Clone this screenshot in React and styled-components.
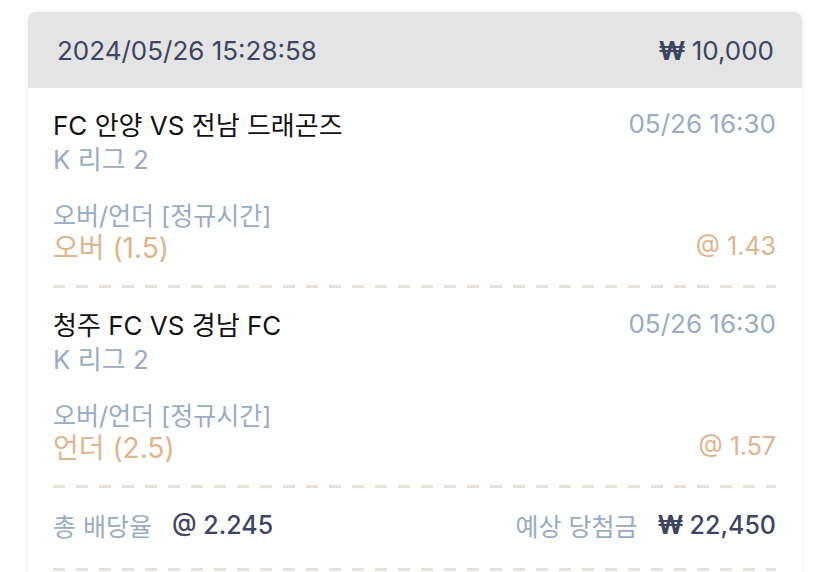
import React from "react";
import styled, { createGlobalStyle } from "styled-components";

const GlobalStyle = createGlobalStyle`
    body {
        margin: 0;
        background: #ffffff;
        font-family: "Inter", "Noto Sans CJK KR", sans-serif;
    }
`

const Card = styled.div`
    width: 774px;
    margin: 12px 0 0 28px;
    border-radius: 8px;
    overflow: hidden;
    background: #ffffff;
    box-shadow: 0 0 6px rgba(0, 0, 0, 0.08);
`

const Header = styled.div`
    height: 76px;
    padding: 0 28px 0 29px;
    display: flex;
    align-items: center;
    justify-content: space-between;
    background: #e4e4e4;
    color: #3d4560;
    font-size: 26px;
`

const Won = styled.span`
    font-weight: 700;
    margin-right: 6px;
`

const Body = styled.div`
    padding: 0 26px 10px 25px;
`

const Block = styled.div`
    padding: ${(p) => (p.$summary ? "20px 0 26px" : "18px 0 23px")};
`

const Row = styled.div`
    display: flex;
    justify-content: space-between;
    align-items: center;
    height: ${(p) => p.$lh || 34}px;
    margin-top: ${(p) => p.$mt || 0}px;
`

const Title = styled.span`
    font-size: 26px;
    color: #111111;
`

const Muted = styled.span`
    font-size: ${(p) => p.$size || 26}px;
    color: #9aabc4;
`

const Pick = styled.span`
    font-size: ${(p) => p.$size || 28}px;
    color: #e0b48c;
`

const Dashed = styled.div`
    height: 3px;
    background-image: linear-gradient(to right, #e7e1db 12px, transparent 12px);
    background-size: 23px 3px;
`

const Group = styled.div`
    display: flex;
    align-items: center;
    gap: 20px;
`

const Strong = styled.span`
    font-size: 25px;
    font-weight: 500;
    color: #3d4560;
`

const matches = [
    { title: "FC 안양 VS 전남 드래곤즈", time: "05/26 16:30", league: "K 리그 2", market: "오버/언더 [정규시간]", pick: "오버 (1.5)", odds: "@ 1.43" },
    { title: "청주 FC VS 경남 FC", time: "05/26 16:30", league: "K 리그 2", market: "오버/언더 [정규시간]", pick: "언더 (2.5)", odds: "@ 1.57" },
]

const App = () => {
    return (
        <>
            <GlobalStyle />
            <Card>
                <Header>
                    <span>2024/05/26 15:28:58</span>
                    <span><Won>₩</Won>10,000</span>
                </Header>
                <Body>
                    {matches.map((m, i) => (
                        <React.Fragment key={i}>
                            <Block>
                                <Row>
                                    <Title>{m.title}</Title>
                                    <Muted>{m.time}</Muted>
                                </Row>
                                <Row>
                                    <Muted>{m.league}</Muted>
                                </Row>
                                <Row $lh={32} $mt={24}>
                                    <Muted $size={25}>{m.market}</Muted>
                                </Row>
                                <Row $lh={32}>
                                    <Pick>{m.pick}</Pick>
                                    <Pick $size={25}>{m.odds}</Pick>
                                </Row>
                            </Block>
                            <Dashed />
                        </React.Fragment>
                    ))}
                    <Block $summary>
                        <Row>
                            <Group>
                                <Muted $size={25}>총 배당율</Muted>
                                <Strong>@ 2.245</Strong>
                            </Group>
                            <Group>
                                <Muted $size={25}>예상 당첨금</Muted>
                                <Strong><Won>₩</Won>22,450</Strong>
                            </Group>
                        </Row>
                    </Block>
                    <Dashed />
                </Body>
            </Card>
        </>
    )
}

export default App
